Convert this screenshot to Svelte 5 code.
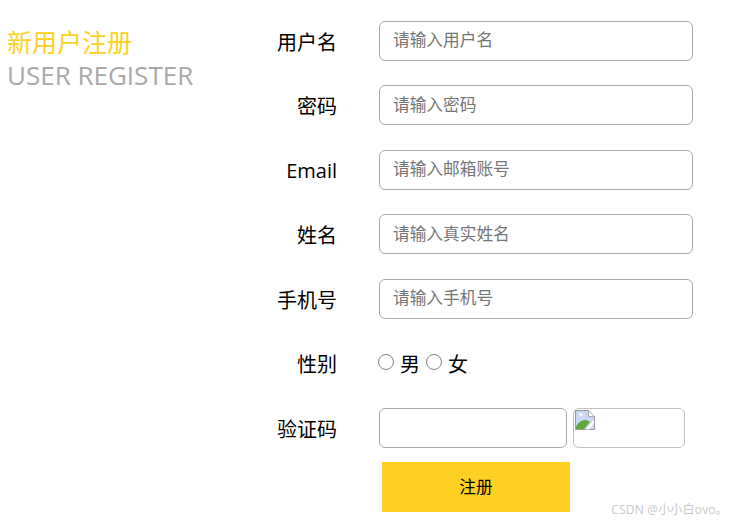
<script lang="ts">
  const fields = [
    { label: "用户名", placeholder: "请输入用户名" },
    { label: "密码", placeholder: "请输入密码" },
    { label: "Email", placeholder: "请输入邮箱账号" },
    { label: "姓名", placeholder: "请输入真实姓名" },
    { label: "手机号", placeholder: "请输入手机号" },
  ];
</script>

<div class="page">
  <div class="intro">
    <p class="title">新用户注册</p>
    <p class="subtitle">USER REGISTER</p>
  </div>

  <form class="form" onsubmit={(e) => e.preventDefault()}>
    {#each fields as field}
      <div class="row">
        <label class="label" for={field.label}>{field.label}</label>
        <input id={field.label} class="input" type="text" placeholder={field.placeholder} />
      </div>
    {/each}

    <div class="row gender">
      <span class="label">性别</span>
      <div class="radios">
        <input class="radio" type="radio" name="sex" id="male" />
        <label for="male">男</label>
        <input class="radio" type="radio" name="sex" id="female" />
        <label for="female">女</label>
      </div>
    </div>

    <div class="row code">
      <label class="label" for="code">验证码</label>
      <input id="code" class="input code-input" type="text" />
      <div class="captcha">
        <svg aria-hidden="true" width="20" height="20" viewBox="0 0 20 20">
          <path d="M0.5 0.5H13.5L19.5 6.5V19.5H0.5Z" fill="#c9d9f5" stroke="#999" />
          <path d="M13.5 0.5V6.5H19.5Z" fill="#fff" stroke="#aaa" />
          <path d="M4 4.5a2 1.2 0 0 1 4 0a2 1.2 0 0 1-4 0Z" fill="#fff" />
          <path d="M1 19V17C3 12 7 10 10 10C12 10 14 11 15 12L9 19Z" fill="#5fa83c" />
          <path d="M19 9.5L11 19.5H14L19 13Z" fill="#fff" />
        </svg>
      </div>
    </div>

    <button class="submit" type="submit">注册</button>
  </form>

  <span class="watermark">CSDN @小小白ovo。</span>
</div>

<style>
  :global(body) {
    background: #fff;
  }

  .page {
    position: relative;
    display: flex;
    width: 733px;
    height: 524px;
    overflow: hidden;
    font-family: "Open Sans", "Noto Sans CJK SC", sans-serif;
    color: #000;
  }

  .intro {
    width: 250px;
    flex-shrink: 0;
    padding: 26px 0 0 7px;
    box-sizing: border-box;
  }

  .title {
    margin: 0;
    font-size: 25px;
    line-height: 33px;
    color: #ffd024;
  }

  .subtitle {
    margin: 0;
    font-size: 26px;
    line-height: 33px;
    color: #a9a9a9;
    white-space: nowrap;
  }

  .form {
    padding-top: 20.9px;
    font-size: 20px;
  }

  .row {
    display: flex;
    align-items: center;
    height: 40px;
    margin-bottom: 24.5px;
  }

  .label {
    width: 87px;
    margin-right: 42px;
    padding-top: 1px;
    text-align: right;
    flex-shrink: 0;
  }

  .input {
    width: 314px;
    height: 40px;
    box-sizing: border-box;
    padding: 0 13px 2px;
    border: 1px solid #a9a9a9;
    border-radius: 6px;
    font-family: inherit;
    font-size: 16.7px;
    outline: none;
  }

  .input::placeholder {
    color: #757575;
  }

  .radios {
    display: flex;
    align-items: center;
    font-size: 20px;
    margin-left: -1px;
  }

  .radio {
    appearance: none;
    width: 16px;
    height: 16px;
    box-sizing: border-box;
    margin: 0 6px 2px 0;
    border: 1.5px solid #858585;
    border-radius: 50%;
    background: #fff;
  }

  .radios label {
    margin-right: 6px;
  }

  .code-input {
    width: 188px;
  }

  .captcha {
    width: 112px;
    height: 40px;
    box-sizing: border-box;
    margin-left: 6px;
    padding: 1px;
    border: 1px solid #c0c0c0;
    border-radius: 6px;
  }

  .captcha svg {
    display: block;
  }

  .submit {
    display: block;
    width: 188px;
    height: 50px;
    margin: -10.5px 0 0 132px;
    padding: 0 0 2px;
    border: 0;
    background: #ffd024;
    font-family: inherit;
    font-size: 16.7px;
    color: #000;
  }

  .watermark {
    position: absolute;
    right: 5px;
    bottom: 6px;
    font-size: 12px;
    letter-spacing: 0.2px;
    color: #c8c8c8;
  }
</style>
